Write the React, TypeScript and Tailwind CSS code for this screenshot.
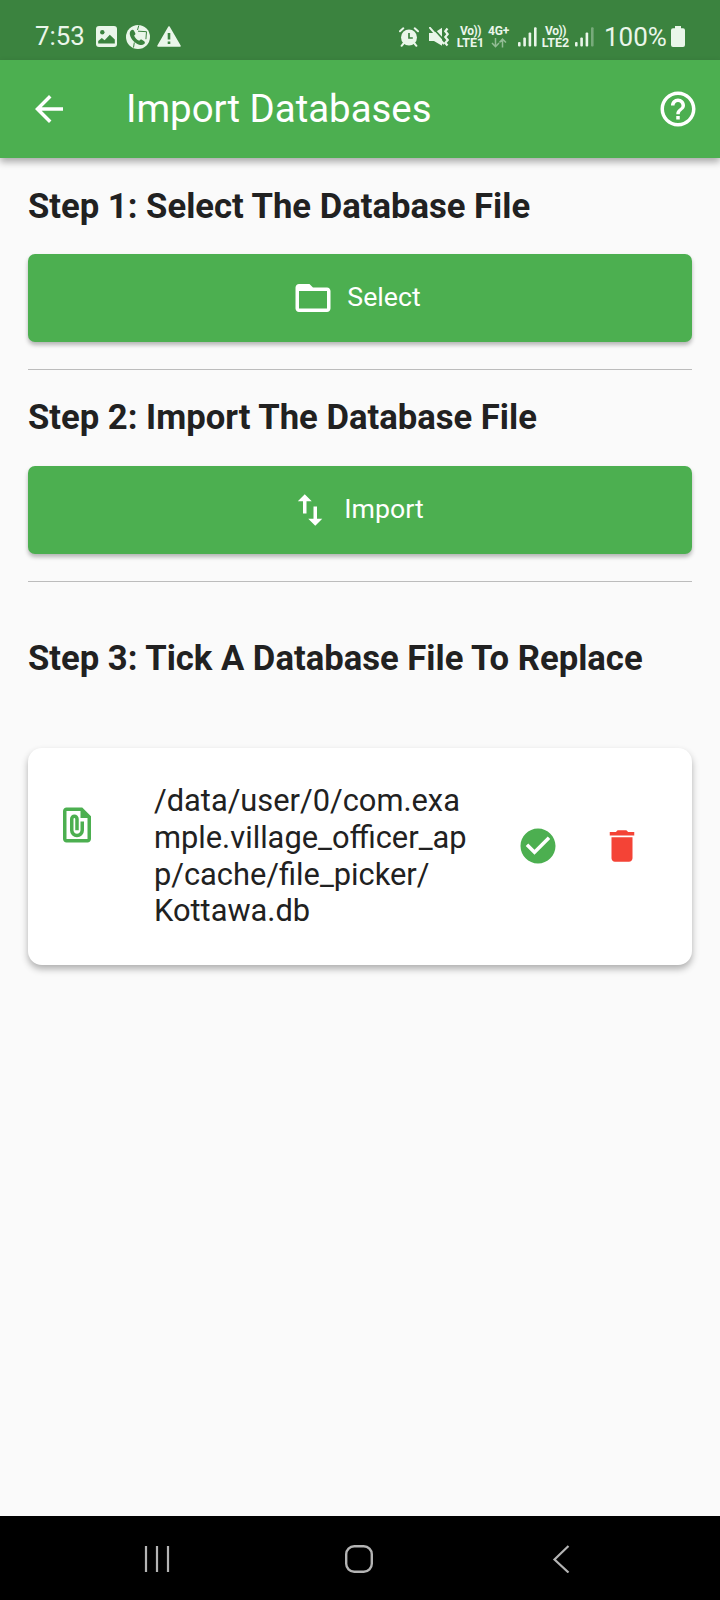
import type { ReactNode } from "react";
import {
  MdArrowBack,
  MdCheckCircle,
  MdDelete,
  MdFolderOpen,
  MdHelpOutline,
  MdImportExport,
} from "react-icons/md";

function VoLte({ slot, className }: { slot: number; className: string }) {
  return (
    <div className={`flex h-[22px] w-[27px] shrink-0 flex-col items-center whitespace-nowrap font-bold ${className}`}>
      <span className="text-[12px] leading-[11px] tracking-[-0.5px]">Vo))</span>
      <span className="text-[12.500px] leading-[11px]">LTE{slot}</span>
    </div>
  );
}

function Signal({ weak, className }: { weak?: boolean; className: string }) {
  return (
    <svg viewBox="0 0 19 20" className={`h-5 w-[19px] shrink-0 ${className}`} fill="currentColor">
      <rect x="0" y="15" width="2.6" height="4.6" rx="1" />
      <rect x="5.3" y="10.5" width="2.6" height="9.1" rx="1" />
      <rect x="10.6" y="5.5" width="2.6" height="14.1" rx="1" />
      <rect x="16" y="0.3" width="2.6" height="19.3" rx="1" opacity={weak ? 0.35 : 1} />
    </svg>
  );
}

function StatusBar() {
  return (
    <header className="flex h-[60px] items-center bg-[#3b833f] pt-[13px] text-[#eaf6ea]">
      <span className="ml-[35px] w-[61px] shrink-0 text-[25.800px] leading-none">7:53</span>
      <svg viewBox="0 0 21 21" className="h-[21px] w-[21px] shrink-0">
        <rect width="21" height="21" rx="3" fill="currentColor" />
        <circle cx="6.3" cy="6.3" r="2.2" fill="#3b833f" />
        <path d="M2.2 17.5v-2.6l3.6-3 2.8 2.3 5.2-5.4 5 4.6v4.1z" fill="#3b833f" />
      </svg>
      <svg viewBox="0 0 24 24" className="ml-[9px] h-6 w-6 shrink-0">
        <circle cx="12" cy="12" r="12" fill="currentColor" />
        <path d="M5 5.5c1-1.200 2.400-1 3 .2l1.300 2.600c.3.8 0 1.500-1.200 2.200.9 2.400 2.800 4.300 5.200 5.300.9-1.300 1.700-1.500 2.600-1l2.300 1.500c1 .8.9 2-.1 2.800-1.300 1.100-3 1.300-5 .6C8.500 17.900 5 14.200 3.900 9.700 3.500 8 4 6.500 5 5.500z" fill="#3b833f" />
        <path d="M11.500 5l1.300-4.500M12 6.200l8.500.5-.6 7.500M8.300 17.500l-.8 5" fill="none" stroke="#3b833f" strokeWidth="1" />
      </svg>
      <svg viewBox="0 0 24 21" className="ml-[7px] h-[21px] w-6 shrink-0">
        <path d="M12 1l11 19H1z" fill="currentColor" stroke="currentColor" strokeWidth="1.500" strokeLinejoin="round" />
        <path d="M12 7v6.500M12 15.500v2.500" stroke="#3b833f" strokeWidth="2.600" />
      </svg>

      <svg viewBox="0 0 20 20" className="ml-[218px] h-5 w-5 shrink-0" fill="none" stroke="currentColor" strokeLinecap="round">
        <circle cx="10" cy="10.500" r="8" fill="currentColor" stroke="none" />
        <path d="M1 4.300L4.300 1.300M19 4.300L15.700 1.300" strokeWidth="2" />
        <path d="M4.500 16.500L2.600 18.800M15.500 16.500l1.900 2.300" strokeWidth="2" />
        <path d="M10 6v5h3.800" stroke="#3b833f" strokeWidth="1.700" strokeLinecap="butt" />
      </svg>
      <svg viewBox="0 0 20 20" className="ml-[10px] h-5 w-5 shrink-0" fill="none">
        <path d="M0 6h5L13 .8v18L5 14H0z" fill="currentColor" />
        <path d="M3 0L17 15.500" stroke="#3b833f" strokeWidth="1.700" />
        <path d="M1 .8L14.500 16.500" stroke="currentColor" strokeWidth="2" strokeLinecap="round" />
        <path d="M18.500 1.500l-2.200 2.800 2.400 2.900-2.400 2.900 2.400 2.900-2.400 2.900 2.200 2.600" stroke="currentColor" strokeWidth="2.200" />
      </svg>
      <VoLte slot={1} className="ml-[8px]" />
      <div className="ml-[4px] flex h-[22px] w-[21px] shrink-0 flex-col items-center">
        <span className="text-[12px] font-bold leading-[11px] tracking-[-0.2px]">4G+</span>
        <svg viewBox="0 0 16 10" className="mt-px h-[10px] w-4 opacity-50" fill="none" stroke="currentColor" strokeWidth="1.500">
          <path d="M4.500 0v8.500M1 5l3.500 3.700L8 5M11.500 9.500V1M8.500 4.500l3-3.400 3.500 3.400" />
        </svg>
      </div>
      <Signal className="ml-[9px]" />
      <VoLte slot={2} className="ml-[5px]" />
      <Signal weak className="ml-[6px]" />
      <span className="ml-[10px] w-[67px] shrink-0 text-[26px] leading-none">100%</span>
      <svg viewBox="0 0 14 21" className="h-[21px] w-[14px] shrink-0" fill="currentColor">
        <path d="M4 0h6v2.200h2a2 2 0 0 1 2 2V19a2 2 0 0 1-2 2H2a2 2 0 0 1-2-2V4.200a2 2 0 0 1 2-2h2z" />
      </svg>
    </header>
  );
}

function ActionButton({ icon, children }: { icon: ReactNode; children: ReactNode }) {
  return (
    <button className="flex h-[88px] w-full items-center justify-center gap-[13px] rounded-[7px] bg-[#4caf50] pr-[7px] text-[26.700px] text-white shadow-[0_3px_4px_rgba(0,0,0,0.28)]">
      {icon}
      <span className="pb-[2px]">{children}</span>
    </button>
  );
}

function StepTitle({ children }: { children: ReactNode }) {
  return (
    <h2 className="whitespace-nowrap text-[34.650px] font-bold leading-[42px] text-[#212121]">{children}</h2>
  );
}

function FilePresentIcon() {
  return (
    <svg viewBox="0 0 24 24" className="h-[42px] w-[42px] shrink-0 text-[#4caf50]" fill="currentColor">
      <path d="M15 2H6c-1.100 0-2 .9-2 2v16c0 1.100.9 2 2 2h12c1.100 0 2-.9 2-2V7l-5-5zM6 20V4h8v4h4v12H6z" />
      <path d="M14 10v5c0 1.100-.9 2-2 2s-2-.9-2-2V8.500c0-.28.220-.5.500-.5s.5.220.5.500V15h2V8.500a2.500 2.500 0 0 0-5 0V15a4 4 0 0 0 8 0v-5h-2z" />
    </svg>
  );
}

export default function App() {
  return (
    <div className="flex h-[1600px] w-[720px] flex-col overflow-hidden bg-[#fafafa] font-['Roboto',sans-serif]">
      <StatusBar />
      <div className="flex h-[98px] items-center bg-[#4caf50] pl-[28px] pr-[21px] text-white shadow-[0_4px_7px_rgba(0,0,0,0.32)]">
        <MdArrowBack className="h-[42px] w-[42px]" />
        <h1 className="ml-[56px] flex-1 whitespace-nowrap text-[38.400px] leading-none">Import Databases</h1>
        <MdHelpOutline className="h-[42px] w-[42px]" />
      </div>

      <main className="flex-1 px-[28px] pt-[27px]">
        <StepTitle>Step 1: Select The Database File</StepTitle>
        <div className="mt-[27px]">
          <ActionButton icon={<MdFolderOpen className="h-[42px] w-[42px]" />}>Select</ActionButton>
        </div>
        <hr className="mt-[27px] border-t border-[#bcbcbc]" />

        <div className="mt-[26px]">
          <StepTitle>Step 2: Import The Database File</StepTitle>
        </div>
        <div className="mt-[28px]">
          <ActionButton icon={<MdImportExport className="h-[42px] w-[42px]" />}>Import</ActionButton>
        </div>
        <hr className="mt-[27px] border-t border-[#bcbcbc]" />

        <div className="mt-[55px]">
          <StepTitle>Step 3: Tick A Database File To Replace</StepTitle>
        </div>

        <section className="mt-[69px] flex h-[217px] items-start rounded-[14px] bg-white pl-[28px] pr-[49px] pt-[35px] shadow-[0_4px_7px_rgba(0,0,0,0.3)]">
          <div className="pt-[21px]">
            <FilePresentIcon />
          </div>
          <p className="ml-[56px] flex-1 whitespace-nowrap text-[30.800px] leading-[36.750px] text-[#212121]">
            /data/user/0/com.exa
            <br />
            mple.village_officer_ap
            <br />
            p/cache/file_picker/
            <br />
            Kottawa.db
          </p>
          <div className="flex gap-[42px] pt-[42px]">
            <MdCheckCircle className="h-[42px] w-[42px] text-[#4caf50]" />
            <MdDelete className="h-[42px] w-[42px] text-[#f44336]" />
          </div>
        </section>
      </main>

      <nav className="flex h-[84px] items-center bg-black pt-[2px]">
        <svg viewBox="0 0 26 28" className="ml-[144px] h-7 w-[26px]" stroke="#b4b4b4" strokeWidth="2.200">
          <path d="M2 1v26M13 1v26M24 1v26" />
        </svg>
        <svg viewBox="0 0 28 28" className="ml-[175px] h-7 w-7" fill="none" stroke="#b4b4b4" strokeWidth="2.400">
          <rect x="1.200" y="1.200" width="25.600" height="25.600" rx="8" />
        </svg>
        <svg viewBox="0 0 18 28" className="ml-[179px] h-7 w-[18px]" fill="none" stroke="#b4b4b4" strokeWidth="2.200">
          <path d="M16.500 1L2.500 14.500l14 13" />
        </svg>
      </nav>
    </div>
  );
}
